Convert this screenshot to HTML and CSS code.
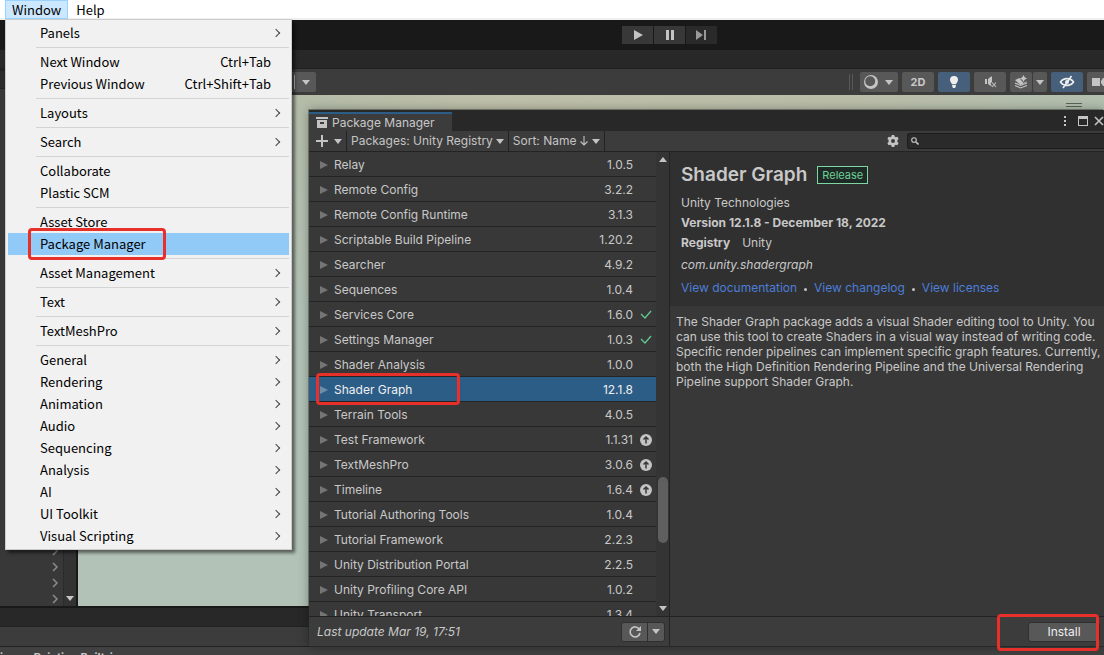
FILE: index.html
```html
<!DOCTYPE html>
<html lang="en">
<head>
<meta charset="utf-8">
<title>Unity Editor - Package Manager</title>
<meta name="viewport" content="width=device-width, initial-scale=1">
<link rel="stylesheet" href="styles.css">
</head>
<body>
<div class="editor">
  <nav class="menubar" aria-label="Main menu">
    <button class="menubar-item open" type="button" aria-expanded="true">Window</button>
    <button class="menubar-item" type="button">Help</button>
  </nav>

  <div class="playbar">
    <button class="play-btn" type="button" aria-label="Play"><svg width="15" height="14" viewBox="0 0 15 14"><path d="M4 2l9 5-9 5z"/></svg></button>
    <button class="play-btn" type="button" aria-label="Pause"><svg width="15" height="14" viewBox="0 0 15 14"><path d="M4 2h3v10H4zM9 2h3v10H9z"/></svg></button>
    <button class="play-btn dim" type="button" aria-label="Step"><svg width="15" height="14" viewBox="0 0 15 14"><path d="M2 2l7 5-7 5zM10 2h2v10h-2z"/></svg></button>
  </div>
  <div class="tabstrip"></div>

  <main class="workspace">
    <section class="hierarchy">
      <div class="hierarchy-search"></div>
      <div class="hierarchy-body">
        <div class="hierarchy-rows">
          <svg width="7" height="10" viewBox="0 0 7 10"><path d="M1 1l4 4-4 4"/></svg>
          <svg width="7" height="10" viewBox="0 0 7 10"><path d="M1 1l4 4-4 4"/></svg>
          <svg width="7" height="10" viewBox="0 0 7 10"><path d="M1 1l4 4-4 4"/></svg>
          <svg width="7" height="10" viewBox="0 0 7 10"><path d="M1 1l4 4-4 4"/></svg>
        </div>
        <div class="hierarchy-scroll"><i class="caret"></i></div>
      </div>
    </section>
    <section class="scene">
      <div class="scene-tools">
        <button class="tool pivot" type="button" aria-label="Grid snapping"><span class="divider"></span><i class="caret"></i></button>
        <span class="grip"></span>
        <button class="tool wide" type="button" aria-label="Draw mode">
          <svg width="14" height="14" viewBox="0 0 14 14"><path fill-rule="evenodd" d="M7 0a7 7 0 1 1 0 14A7 7 0 0 1 7 0zM6.200 1.200a5 5 0 1 0 0 10 5 5 0 0 0 0-10z"/></svg>
          <i class="caret"></i>
        </button>
        <button class="tool" type="button">2D</button>
        <button class="tool on" type="button" aria-label="Lighting"><svg width="14" height="14" viewBox="0 0 14 14"><path d="M7 1a4 4 0 0 1 4 4c0 1.600-1.500 2.700-2 4.200H5C4.500 7.700 3 6.600 3 5a4 4 0 0 1 4-4zM5.200 10h3.600v1.500L8 13H6l-.8-1.500z"/></svg></button>
        <button class="tool" type="button" aria-label="Audio"><svg width="14" height="14" viewBox="0 0 14 14"><path d="M2 4h2v5H2zM5 4l3-2.500h1V7L7.500 8.500 8.500 10v1.500L5 9z"/><path class="line thin" d="M9 7.500l4 4.500M13 7.500L9 12"/></svg></button>
        <span class="split">
          <button class="tool fx" type="button" aria-label="Effects"><svg width="14" height="14" viewBox="0 0 14 14"><path d="M9.500 0l1.200 2.300L13 3.500l-2.300 1.200L9.500 7 8.300 4.700 6 3.500l2.300-1.200zM1 5l4.500-2L7 5l2.500 3L12 6.500l1 .5-6.500 3z"/><path class="line thin" d="M1 8l5.500 2.500L13 8M1 10.500L6.500 13l6.500-2.500"/></svg></button>
          <button class="tool fx-drop" type="button" aria-label="Effects menu"><i class="caret"></i></button>
        </span>
        <button class="tool on" type="button" aria-label="Scene visibility"><svg width="16" height="14" viewBox="0 0 16 14"><path class="line" d="M1.500 7c3-4.500 10-4.500 13 0-3 4.500-10 4.500-13 0zM12.500 1L4 13"/><circle cx="8" cy="7" r="2"/></svg></button>
        <button class="tool camera" type="button" aria-label="Camera"><svg width="15" height="14" viewBox="0 0 15 14"><path d="M1 3h8v8H1zM10 6l2-3h3v8h-3l-2-3z"/></svg></button>
      </div>
      <div class="viewport"><span class="overlay-grip"></span></div>
    </section>
  </main>

  <div class="lower-tabs"></div>
  <div class="lower-tools"></div>
  <div class="lower-body"><span>in</span><span>Painting Built-in</span></div>

  <section class="pm" aria-label="Package Manager">
    <header class="pm-titlebar">
      <div class="pm-tab">
        <svg width="12" height="12" viewBox="0 0 12 12"><path fill-rule="evenodd" d="M0 0h12v2H0zM1 3h10v8H1zM4 5v2h4V5z"/></svg>
        <span>Package Manager</span>
      </div>
      <div class="pm-winctl">
        <button type="button" aria-label="Options"><svg width="4" height="12" viewBox="0 0 4 12"><path d="M1 1h2v2H1zM1 5h2v2H1zM1 9h2v2H1z"/></svg></button>
        <button type="button" aria-label="Maximize"><svg width="10" height="10" viewBox="0 0 10 10"><path fill-rule="evenodd" d="M0 0h10v10H0zM1 3v6h8V3z"/></svg></button>
        <button type="button" aria-label="Close"><svg width="10" height="10" viewBox="0 0 10 10"><path class="line" d="M1 1l8 8M9 1L1 9"/></svg></button>
      </div>
    </header>
    <div class="pm-toolbar">
      <button class="pm-tool" type="button" aria-label="Add package"><svg width="12" height="12" viewBox="0 0 12 12"><path d="M5 0h2v5h5v2H7v5H5V7H0V5h5z"/></svg><i class="caret"></i></button>
      <button class="pm-tool" type="button">Packages: Unity Registry<i class="caret"></i></button>
      <button class="pm-tool sorter" type="button">Sort: Name<svg width="8" height="10" viewBox="0 0 8 10"><path class="line thin" d="M4 0v9M.5 5.500L4 9l3.500-3.500"/></svg><i class="caret"></i></button>
      <button class="pm-gear" type="button" aria-label="Settings"><svg width="12" height="12" viewBox="0 0 12 12"><path fill-rule="evenodd" d="M4.800 0h2.400l.4 1.600 1.200.7L10.400 1.800l1.200 2.100L10.400 5v2l1.200 1.100-1.200 2.100-1.600-.5-1.200.7L7.200 12H4.800l-.4-1.600-1.200-.7-1.600.5L.4 8.100 1.600 7V5L.4 3.900l1.200-2.100 1.600.5 1.200-.7zM6 4a2 2 0 1 0 0 4 2 2 0 0 0 0-4z"/></svg></button>
      <label class="pm-search">
        <svg width="8" height="8" viewBox="0 0 8 8"><circle class="line thin" cx="3" cy="3" r="2.300"/><path class="line" d="M5 5l2.500 2.500"/></svg>
        <input type="text" aria-label="Search packages">
      </label>
    </div>
    <div class="pm-content">
      <div class="pm-left">
        <div class="pm-listwrap">
          <ul class="pm-list" id="packages">
            <li><i class="fold"></i><span>Relay</span><b>1.0.5</b></li>
            <li><i class="fold"></i><span>Remote Config</span><b>3.2.2</b></li>
            <li><i class="fold"></i><span>Remote Config Runtime</span><b>3.1.3</b></li>
            <li><i class="fold"></i><span>Scriptable Build Pipeline</span><b>1.20.2</b></li>
            <li><i class="fold"></i><span>Searcher</span><b>4.9.2</b></li>
            <li><i class="fold"></i><span>Sequences</span><b>1.0.4</b></li>
            <li><i class="fold"></i><span>Services Core</span><b>1.6.0</b><svg class="check" width="12" height="12" viewBox="0 0 12 12"><path d="M1 5l4 4 6-7"/></svg></li>
            <li><i class="fold"></i><span>Settings Manager</span><b>1.0.3</b><svg class="check" width="12" height="12" viewBox="0 0 12 12"><path d="M1 5l4 4 6-7"/></svg></li>
            <li><i class="fold"></i><span>Shader Analysis</span><b>1.0.0</b></li>
            <li class="selected"><i class="fold"></i><span>Shader Graph</span><b>12.1.8</b><em class="mark mark-row"></em></li>
            <li><i class="fold"></i><span>Terrain Tools</span><b>4.0.5</b></li>
            <li><i class="fold"></i><span>Test Framework</span><b>1.1.31</b><svg class="update" width="12" height="12" viewBox="0 0 12 12"><circle cx="6" cy="6" r="6"/><path d="M6 9.500V3M3.500 5.500L6 3l2.500 2.500"/></svg></li>
            <li><i class="fold"></i><span>TextMeshPro</span><b>3.0.6</b><svg class="update" width="12" height="12" viewBox="0 0 12 12"><circle cx="6" cy="6" r="6"/><path d="M6 9.500V3M3.500 5.500L6 3l2.500 2.500"/></svg></li>
            <li><i class="fold"></i><span>Timeline</span><b>1.6.4</b><svg class="update" width="12" height="12" viewBox="0 0 12 12"><circle cx="6" cy="6" r="6"/><path d="M6 9.500V3M3.500 5.500L6 3l2.500 2.500"/></svg></li>
            <li><i class="fold"></i><span>Tutorial Authoring Tools</span><b>1.0.4</b></li>
            <li><i class="fold"></i><span>Tutorial Framework</span><b>2.2.3</b></li>
            <li><i class="fold"></i><span>Unity Distribution Portal</span><b>2.2.5</b></li>
            <li><i class="fold"></i><span>Unity Profiling Core API</span><b>1.0.2</b></li>
            <li><i class="fold"></i><span>Unity Transport</span><b>1.3.4</b></li>
          </ul>
          <div class="pm-scroll"><i class="caret up"></i><span class="thumb"></span><i class="caret"></i></div>
        </div>
        <footer class="pm-status">
          <em>Last update Mar 19, 17:51</em>
          <span class="refresh">
            <button type="button" aria-label="Refresh"><svg width="14" height="14" viewBox="0 0 14 14"><path class="line" d="M11.500 4.500A5 5 0 1 0 12 8"/><path d="M13 1v5H8z"/></svg></button>
            <button type="button" aria-label="Refresh options"><i class="caret"></i></button>
          </span>
        </footer>
      </div>
      <article class="pm-detail">
        <div class="pm-head">
          <div class="pm-title"><h1>Shader Graph</h1><span class="tag">Release</span></div>
          <p class="author">Unity Technologies</p>
          <p class="version">Version 12.1.8 - December 18, 2022</p>
          <p class="registry"><strong>Registry</strong><span>Unity</span></p>
          <p class="pkg-id">com.unity.shadergraph</p>
          <p class="links"><a href="#doc">View documentation</a><i></i><a href="#log">View changelog</a><i></i><a href="#lic">View licenses</a></p>
        </div>
        <p class="pm-desc">The Shader Graph package adds a visual Shader editing tool to Unity. You can use this tool to create Shaders in a visual way instead of writing code. Specific render pipelines can implement specific graph features. Currently, both the High Definition Rendering Pipeline and the Universal Rendering Pipeline support Shader Graph.</p>
        <footer class="pm-actions"><button class="install" type="button">Install</button><em class="mark mark-install"></em></footer>
      </article>
    </div>
  </section>

  <div class="menu" role="menu">
    <button type="button" role="menuitem" class="sub">Panels</button>
    <hr>
    <button type="button" role="menuitem">Next Window<kbd>Ctrl+Tab</kbd></button>
    <button type="button" role="menuitem">Previous Window<kbd>Ctrl+Shift+Tab</kbd></button>
    <hr>
    <button type="button" role="menuitem" class="sub">Layouts</button>
    <hr>
    <button type="button" role="menuitem" class="sub">Search</button>
    <hr>
    <button type="button" role="menuitem">Collaborate</button>
    <button type="button" role="menuitem">Plastic SCM</button>
    <hr>
    <button type="button" role="menuitem">Asset Store</button>
    <button type="button" role="menuitem" class="hover">Package Manager<em class="mark mark-menu"></em></button>
    <hr>
    <button type="button" role="menuitem" class="sub">Asset Management</button>
    <hr>
    <button type="button" role="menuitem" class="sub">Text</button>
    <hr>
    <button type="button" role="menuitem" class="sub">TextMeshPro</button>
    <hr>
    <button type="button" role="menuitem" class="sub">General</button>
    <button type="button" role="menuitem" class="sub">Rendering</button>
    <button type="button" role="menuitem" class="sub">Animation</button>
    <button type="button" role="menuitem" class="sub">Audio</button>
    <button type="button" role="menuitem" class="sub">Sequencing</button>
    <button type="button" role="menuitem" class="sub">Analysis</button>
    <button type="button" role="menuitem" class="sub">AI</button>
    <button type="button" role="menuitem" class="sub">UI Toolkit</button>
    <button type="button" role="menuitem" class="sub">Visual Scripting</button>
  </div>
</div>
</body>
</html>
```
FILE: styles.css
```css
* { box-sizing: border-box; }
body { margin: 0; font: 12px/16px Inter, "Liberation Sans", sans-serif; color: #c8c8c8; background: #191919; }
button { margin: 0; padding: 0; border: 0; background: none; font: inherit; color: inherit; }
p, h1, ul { margin: 0; padding: 0; }
svg { display: block; flex: none; fill: #c4c4c4; }
svg .line { fill: none; stroke: #c4c4c4; stroke-width: 1.6; }
svg .thin { stroke-width: 1.1; }

.editor { position: relative; display: flex; flex-direction: column; height: 100vh; overflow: hidden; }

.caret { flex: none; width: 0; height: 0; border: 4px solid transparent; border-top: 5px solid #c4c4c4; border-bottom: 0; }
.caret.up { border-top: 0; border-bottom: 5px solid #c4c4c4; }

/* Menu bar */
.menubar { display: flex; flex: none; height: 20px; padding-left: 5px; background: #fff; border-bottom: 2px solid #f0f0f0; font: 13px/18px "Noto Sans CJK SC", "Noto Sans", sans-serif; color: #000; }
.menubar-item { height: 19px; padding: 0 7px; border: 1px solid transparent; line-height: 17px; }
.menubar-item.open { padding: 0 6px; background: #cce8ff; border-color: #99d1ff; }

/* Drop-down menu */
.menu { position: absolute; left: 5px; top: 19px; width: 287px; padding: 2px; background: #f1f1f1; border: 1px solid #ccc; box-shadow: 3px 3px 3px rgba(0, 0, 0, .5); font: 13px/20px "Noto Sans CJK SC", "Noto Sans", sans-serif; color: #000; }
.menu button { position: relative; display: flex; align-items: center; width: 100%; height: 22px; padding: 0 18px 0 32px; }
.menu kbd { margin-left: auto; font: inherit; }
.menu hr { height: 1px; margin: 3px 0 3px 28px; border: 0; background: #d4d4d4; }
.menu .hover { background: #91c9f7; }
.menu .sub { justify-content: space-between; padding-right: 10px; }
.menu .sub::after { content: ""; width: 5px; height: 5px; border: solid #444; border-width: 1px 1px 0 0; transform: rotate(45deg); }

/* Red highlight frames */
.mark { position: absolute; border: 3px solid #e8302a; border-radius: 4px; pointer-events: none; }
.mark-menu { left: 20px; top: -5px; width: 138px; height: 32px; }
.mark-row { left: 7px; top: -4px; width: 144px; height: 32px; }
.mark-install { right: 5px; top: -3px; width: 102px; height: 37px; }

/* Play controls */
.playbar { display: flex; flex: none; justify-content: center; align-items: center; gap: 1px; height: 30px; padding-left: 234px; background: #191919; }
.play-btn { display: grid; place-items: center; width: 31px; height: 18px; background: #383838; }
.play-btn.dim { background: #2a2a2a; }
.play-btn.dim svg { fill: #999; }
.tabstrip { flex: none; height: 19px; background: #282828; border-bottom: 1px solid #202020; }

/* Workspace */
.workspace { display: flex; flex: 1; min-height: 0; border-bottom: 2px solid #191919; }
.hierarchy { display: flex; flex: none; flex-direction: column; width: 78px; border-right: 2px solid #191919; background: #383838; }
.hierarchy-search { height: 20px; background: #2b2b2b; border: solid #222; border-width: 2px 0 1px; }
.hierarchy-body { display: flex; flex: 1; min-height: 0; }
.hierarchy-rows { display: flex; flex: 1; flex-direction: column; justify-content: flex-end; align-items: flex-end; gap: 6px; padding: 0 4px 2px 0; }
.hierarchy-rows svg { fill: none; stroke: #8c8c8c; stroke-width: 1.5; }
.hierarchy-scroll { display: flex; align-items: flex-end; justify-content: center; width: 13px; padding-bottom: 5px; background: #333; border-left: 1px solid #2b2b2b; }
.scene { display: flex; flex: 1; flex-direction: column; min-width: 0; }
.scene-tools { display: flex; flex: none; align-items: center; gap: 4px; height: 26px; background: #3c3c3c; }
.tool { display: flex; align-items: center; justify-content: center; gap: 7px; flex: none; width: 32px; height: 20px; border-radius: 2px; background: #585858; font-weight: 700; font-size: 11px; }
.tool.on { background: #46607c; }
.tool.on svg { fill: #eee; }
.tool.on .line { stroke: #eee; }
.tool.wide { width: 38px; padding-right: 2px; }
.tool.pivot { width: 31px; margin-left: 207px; justify-content: flex-end; padding-right: 6px; }
.divider { width: 1px; height: 14px; background: #c4c4c4; }
.grip { width: 4px; height: 16px; margin-left: auto; margin-right: 3px; border: solid #585858; border-width: 0 1px; }
.split { display: flex; gap: 1px; }
.tool.fx { width: 22px; }
.tool.fx-drop { width: 14px; }
.tool.camera { width: 17px; justify-content: flex-start; padding-left: 4px; border-radius: 2px 0 0 2px; overflow: hidden; }
.viewport { display: flex; flex: 1; justify-content: flex-end; align-items: flex-start; padding: 8px 22px 0 0; background: linear-gradient(rgba(178, 194, 183, 0), #b2c2b7 45%), linear-gradient(90deg, #b4bca8, #b4bca8 22%, #bebfa9 40%, #babda8 75%, #b2bfae); }
.overlay-grip { width: 16px; height: 4px; border: solid #5c625c; border-width: 1px 0; }

/* Lower dock */
.lower-tabs { flex: none; height: 18px; background: #282828; }
.lower-tools { flex: none; height: 21px; background: #3c3c3c; border: solid #222; border-width: 1px 0; }
.lower-body { display: flex; flex: none; gap: 24px; height: 8px; padding-top: 3px; overflow: hidden; background: #414141; font-size: 11px; font-weight: 700; line-height: 14px; }

/* Package Manager window */
.pm { position: absolute; left: 309px; right: 0; top: 110px; bottom: 8px; display: flex; flex-direction: column; background: #383838; border-bottom: 1px solid #282828; box-shadow: 0 0 10px rgba(0, 0, 0, .35), -1px -1px 0 rgba(40, 50, 40, .4); }
.pm-titlebar { display: flex; flex: none; justify-content: space-between; height: 21px; background: #282828; }
.pm-tab { display: flex; align-items: center; gap: 4px; width: 143px; margin-top: 2px; padding-left: 7px; background: #3c3c3c; border-top: 2px solid #2c5d87; }
.pm-winctl { display: flex; align-items: center; gap: 9px; }
.pm-winctl button:first-child { margin-right: 2px; }
.pm-winctl button:nth-child(2) { margin-right: -3px; }
.pm-toolbar { display: flex; flex: none; align-items: center; height: 21px; background: #3c3c3c; border-bottom: 1px solid #232323; }
.pm-tool { display: flex; align-items: center; gap: 3px; height: 20px; padding: 0 4px; border-right: 1px solid #232323; color: #c4c4c4; }
.pm-tool:first-child { gap: 6px; padding-left: 7px; }
.pm-tool.sorter { gap: 4px; }
.pm-gear { margin-left: auto; margin-right: 8px; }
.pm-search { display: flex; align-items: center; flex: none; gap: 4px; width: 197px; height: 16px; padding-left: 3px; background: #2a2a2a; border: 1px solid #1c1c1c; border-right: 0; border-radius: 3px 0 0 3px; }
.pm-search input { flex: 1; min-width: 0; height: 14px; padding: 0; border: 0; outline: 0; background: none; color: #c8c8c8; font: inherit; }
.pm-content { display: flex; flex: 1; min-height: 0; }
.pm-left { display: flex; flex: none; flex-direction: column; width: 361px; border-right: 1px solid #232323; }
.pm-listwrap { display: flex; flex: 1; min-height: 0; }
.pm-list { flex: 1; overflow: hidden; list-style: none; }
.pm-list li { position: relative; display: flex; align-items: center; height: 25px; padding: 1px 4px 0 11px; border-bottom: 1px solid #242424; }
.pm-list li span { flex: 1; margin-left: 6px; }
.pm-list b { width: 60px; margin-right: 19px; font-weight: 400; text-align: right; }
.pm-list b:has(+ svg) { margin-right: 7px; }
.pm-list .selected { overflow: visible; background: #2c5d87; color: #f0f0f0; }
.fold { width: 0; height: 0; border: 4px solid transparent; border-left: 8px solid #757575; border-right: 0; }
.selected .fold { border-left-color: #6d8ea8; }
.check { fill: none; stroke: #64c894; stroke-width: 1.3; }
.update path { fill: none; stroke: #383838; stroke-width: 1.5; }
.pm-scroll { display: flex; flex: none; flex-direction: column; align-items: center; width: 13px; padding: 5px 0; background: #343434; }
.thumb { width: 10px; height: 66px; margin-top: auto; margin-bottom: 63px; border-radius: 5px; background: #5f5f5f; }
.pm-status { display: flex; flex: none; align-items: center; justify-content: space-between; height: 30px; padding: 0 4px 0 8px; background: #3c3c3c; border-top: 1px solid #232323; }
.refresh { display: flex; height: 20px; border: 1px solid #303030; border-radius: 3px; background: #585858; }
.refresh button { display: grid; place-items: center; width: 25px; }
.refresh button + button { width: 17px; border-left: 1px solid #303030; }

.pm-detail { display: flex; flex: 1; flex-direction: column; min-width: 0; }
.pm-head { padding: 11px 11px 10px; background: #303030; }
.pm-title { display: flex; align-items: center; gap: 10px; height: 24px; }
.pm-title h1 { font-size: 19px; line-height: 24px; font-weight: 600; }
.tag { padding: 0 4px; border: 1px solid #7fd6a5; background: #1f2a26; color: #6fcf97; font-size: 11px; }
.author { margin-top: 8px; }
.version { margin-top: 4px; font-weight: 700; }
.registry { display: flex; gap: 12px; margin-top: 4px; }
.registry strong { font-weight: 700; }
.pkg-id { margin-top: 6px; font-style: italic; }
.links { display: flex; align-items: center; gap: 7px; margin-top: 7px; }
.links a { color: #4c7eda; text-decoration: none; }
.links i { width: 3px; height: 3px; margin-top: 3px; border-radius: 50%; background: #c4c4c4; }
.pm-desc { flex: 1; padding: 8px 0 8px 6px; line-height: 15px; }
.pm-actions { position: relative; display: flex; flex: none; align-items: center; justify-content: flex-end; height: 30px; padding-right: 4px; background: #3c3c3c; border-top: 1px solid #232323; }
.install { width: 72px; height: 20px; border: 1px solid #303030; border-radius: 3px; background: #585858; color: #eee; }
```
